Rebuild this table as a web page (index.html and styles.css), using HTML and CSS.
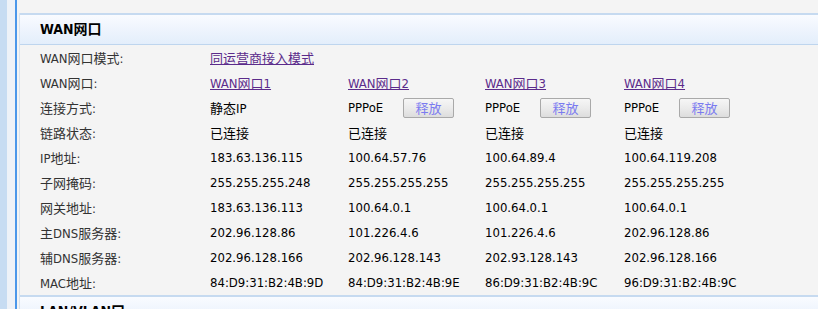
FILE: index.html
```html
<!DOCTYPE html>
<html lang="zh-CN">
<head>
<meta charset="utf-8">
<title>WAN网口</title>
<link rel="stylesheet" href="styles.css">
</head>
<body>
<div class="frame">
  <div class="rail"></div>
  <div class="rail-gap"></div>
  <div class="rail-line"></div>
  <main class="content">
    <section class="panel">
      <h2 class="panel-head">WAN网口</h2>
      <div class="grid">
        <div class="label">WAN网口模式:</div>
        <div class="cell span"><a class="link" href="#">同运营商接入模式</a></div>

        <div class="label">WAN网口:</div>
        <div class="cell"><a class="link" href="#">WAN网口1</a></div>
        <div class="cell"><a class="link" href="#">WAN网口2</a></div>
        <div class="cell"><a class="link" href="#">WAN网口3</a></div>
        <div class="cell"><a class="link" href="#">WAN网口4</a></div>

        <div class="label">连接方式:</div>
        <div class="cell">静态IP</div>
        <div class="cell"><span class="mode">PPPoE</span><button class="btn" type="button">释放</button></div>
        <div class="cell"><span class="mode">PPPoE</span><button class="btn" type="button">释放</button></div>
        <div class="cell"><span class="mode">PPPoE</span><button class="btn" type="button">释放</button></div>

        <div class="label">链路状态:</div>
        <div class="cell">已连接</div>
        <div class="cell">已连接</div>
        <div class="cell">已连接</div>
        <div class="cell">已连接</div>

        <div class="label">IP地址:</div>
        <div class="cell">183.63.136.115</div>
        <div class="cell">100.64.57.76</div>
        <div class="cell">100.64.89.4</div>
        <div class="cell">100.64.119.208</div>

        <div class="label">子网掩码:</div>
        <div class="cell">255.255.255.248</div>
        <div class="cell">255.255.255.255</div>
        <div class="cell">255.255.255.255</div>
        <div class="cell">255.255.255.255</div>

        <div class="label">网关地址:</div>
        <div class="cell">183.63.136.113</div>
        <div class="cell">100.64.0.1</div>
        <div class="cell">100.64.0.1</div>
        <div class="cell">100.64.0.1</div>

        <div class="label">主DNS服务器:</div>
        <div class="cell">202.96.128.86</div>
        <div class="cell">101.226.4.6</div>
        <div class="cell">101.226.4.6</div>
        <div class="cell">202.96.128.86</div>

        <div class="label">辅DNS服务器:</div>
        <div class="cell">202.96.128.166</div>
        <div class="cell">202.96.128.143</div>
        <div class="cell">202.93.128.143</div>
        <div class="cell">202.96.128.166</div>

        <div class="label">MAC地址:</div>
        <div class="cell">84:D9:31:B2:4B:9D</div>
        <div class="cell">84:D9:31:B2:4B:9E</div>
        <div class="cell">86:D9:31:B2:4B:9C</div>
        <div class="cell">96:D9:31:B2:4B:9C</div>
      </div>
    </section>
    <section class="panel">
      <h2 class="panel-head">LAN/VLAN口</h2>
    </section>
  </main>
</div>
</body>
</html>
```

FILE: styles.css
```css
html, body {
  margin: 0;
  padding: 0;
  height: 309px;
  overflow: hidden;
  background: #f4f4f4;
}

body {
  font-family: "DejaVu Sans Condensed", "DejaVu Sans", "Noto Sans CJK SC", sans-serif;
  font-size: 13px;
  color: #000;
}

.frame {
  display: flex;
  height: 309px;
}

.rail {
  width: 7px;
  flex: none;
  background: #c7dcf2;
}

.rail-gap {
  width: 8px;
  flex: none;
  background: #eef2f8;
}

.rail-line {
  width: 2px;
  flex: none;
  background: #4b97ea;
}

.content {
  flex: 1;
  min-width: 0;
  padding: 13px 0 0 2px;
  background: #f4f4f4;
}

.panel {
  border-left: 1px solid #d6e2ef;
}

.panel-head {
  margin: 0;
  height: 29px;
  line-height: 29px;
  padding-left: 20px;
  border-top: 2px solid #c6daf0;
  border-bottom: 1px solid #bed5ee;
  background: linear-gradient(to bottom, #f9fbff 0%, #eef4fd 50%, #e3eefb 100%);
  font-size: 14px;
  font-weight: bold;
  color: #000;
}

.grid {
  display: grid;
  grid-template-columns: 170px 138px 137px 139px 1fr;
  grid-auto-rows: 25px;
  padding-left: 20px;
  align-items: center;
}

.label {
  color: #333;
  white-space: nowrap;
}

.cell {
  display: flex;
  align-items: center;
  white-space: nowrap;
}

.span {
  grid-column: 2 / 6;
}

.link {
  color: #5b2b8b;
  text-decoration: underline;
}

.mode {
  width: 55px;
  flex: none;
}

.btn {
  width: 51px;
  height: 20px;
  padding: 0;
  border: 1px solid #a9a9a9;
  border-radius: 2px;
  background: linear-gradient(to bottom, #f6f6f6 0%, #ebebeb 50%, #dddddd 100%);
  font-family: "Noto Sans CJK SC", sans-serif;
  font-size: 13px;
  line-height: 18px;
  color: #7b7bf0;
}
```
